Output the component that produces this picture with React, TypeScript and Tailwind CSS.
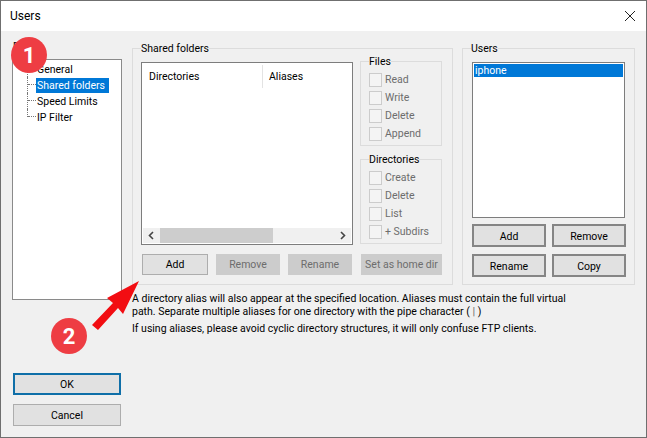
import React from 'react';

const disabledText = 'text-[#6d6d6d]';

function Group({ label, className, children }: { label: string; className?: string; children: React.ReactNode }) {
  return (
    <div className={`border border-[#dcdcdc] ${className ?? ''}`}>
      <div className="-mt-2 ml-2 h-[14px] w-fit bg-[#f0f0f0] leading-[16px]">{label}</div>
      {children}
    </div>
  );
}

function Check({ label }: { label: string }) {
  return (
    <div className="flex h-[18px] items-start gap-[3px]">
      <span className="h-[14px] w-[13px] shrink-0 border border-[#cccccc] bg-[#f4f4f4]" />
      <span className={`leading-[14px] ${disabledText}`}>{label}</span>
    </div>
  );
}

function PermGroup({ label, items }: { label: string; items: string[] }) {
  return (
    <Group label={label} className="h-[85px] w-[82px]">
      <div className="mt-[5px] pl-2">
        {items.map((item) => (
          <Check key={item} label={item} />
        ))}
      </div>
    </Group>
  );
}

function DisabledBtn({ label, className }: { label: string; className: string }) {
  return (
    <div className={`flex h-[21px] items-center justify-center whitespace-nowrap bg-[#cccccc] pt-[1px] ${disabledText} ${className}`}>{label}</div>
  );
}

function UserBtn({ label }: { label: string }) {
  return (
    <div className="flex h-[23px] w-[74px] items-center justify-center border-2 border-[#858585] bg-[#e1e1e1] pt-[2px]">{label}</div>
  );
}

function TreeRow({ label, selected, last }: { label: string; selected?: boolean; last?: boolean }) {
  return (
    <div className="flex h-4 items-center">
      <div className={`w-[9px] self-start border-l border-dotted border-[#777777] ${last ? 'h-2' : 'h-4'}`}>
        <div className="h-2 border-b border-dotted border-[#777777]" />
      </div>
      <span className={`whitespace-nowrap px-[1px] leading-[15px] ${selected ? 'w-[73px] bg-[#0078d7] text-white' : ''}`}>{label}</span>
    </div>
  );
}

export default function App() {
  return (
    <div className="relative flex h-[438px] w-[647px] flex-col overflow-hidden border border-[#6f6f6f] bg-[#f0f0f0] font-['Roboto','Liberation_Sans',sans-serif] text-[10.5px] text-[#000000]">
      {/* title bar */}
      <div className="flex h-[30px] shrink-0 items-center justify-between bg-white pl-[9px] pr-[10px]">
        <span className="text-[12px]">Users</span>
        <svg width="12" height="12" viewBox="0 0 12 12" className="mb-[1px]">
          <path d="M1 1 L11 11 M11 1 L1 11" stroke="#222222" strokeWidth="1" fill="none" />
        </svg>
      </div>

      <div className="flex flex-1 pl-[11px] pt-[17px]">
        {/* left column */}
        <div className="flex w-[110px] flex-col">
          <div className="h-[11px] -translate-y-2 pl-[1px] leading-[14px]">Page</div>
          <div className="h-[241px] border border-[#8a8a8a] bg-white pl-[14px] pt-[1px]">
            <TreeRow label="General" />
            <TreeRow label="Shared folders" selected />
            <TreeRow label="Speed Limits" />
            <TreeRow label="IP Filter" last />
          </div>
          <div className="ml-[1px] mt-[73px] flex h-[22px] w-[108px] items-center justify-center border-2 border-[#0f6fa8] bg-[#e1e1e1] pt-[1px]">OK</div>
          <div className="ml-[1px] mt-[9px] flex h-[22px] w-[108px] items-center justify-center border border-[#adadad] bg-[#e1e1e1] pt-[1px]">Cancel</div>
        </div>

        {/* right column */}
        <div className="ml-[10px] flex w-[503px] flex-col">
          <div className="flex gap-[9px]">
            <Group label="Shared folders" className="h-[237px] w-[321px]">
              <div className="mt-[7px] flex gap-[7px] pl-2">
                <div className="flex h-[183px] w-[212px] flex-col justify-between border border-[#7d7d7d] bg-white p-[1px]">
                  <div className="flex h-6 items-center pt-[1px]">
                    <span className="w-[119px] pl-[6px]">Directories</span>
                    <span className="h-full border-l border-[#e3e3e3] pl-[6px] leading-6">Aliases</span>
                  </div>
                  <div className="flex h-[15px] items-center bg-[#f0f0f0]">
                    <svg width="17" height="15" viewBox="0 0 17 15" className="shrink-0">
                      <path d="M10 4 L6.5 7.5 L10 11" stroke="#444444" strokeWidth="1.6" fill="none" />
                    </svg>
                    <div className="h-[15px] w-[113px] bg-[#cdcdcd]" />
                    <svg width="17" height="15" viewBox="0 0 17 15" className="ml-auto shrink-0">
                      <path d="M7 4 L10.5 7.5 L7 11" stroke="#444444" strokeWidth="1.6" fill="none" />
                    </svg>
                  </div>
                </div>
                <div className="-mt-[1px] flex flex-col gap-[13px]">
                  <PermGroup label="Files" items={['Read', 'Write', 'Delete', 'Append']} />
                  <PermGroup label="Directories" items={['Create', 'Delete', 'List', '+ Subdirs']} />
                </div>
              </div>
              <div className="ml-[9px] mt-[9px] flex">
                <div className="flex h-[21px] w-[66px] items-center justify-center border border-[#adadad] bg-[#e1e1e1] pt-[1px]">Add</div>
                <DisabledBtn label="Remove" className="ml-2 w-[64px]" />
                <DisabledBtn label="Rename" className="ml-2 w-[64px]" />
                <DisabledBtn label="Set as home dir" className="ml-[9px] w-[81px]" />
              </div>
            </Group>

            <Group label="Users" className="h-[237px] w-[173px]">
              <div className="ml-[9px] mt-[7px] h-[156px] w-[153px] border border-[#7d7d7d] bg-white p-[1px]">
                <div className="h-[13px] bg-[#0078d7] pl-[1px] leading-[13px] text-white">iphone</div>
              </div>
              <div className="ml-[9px] mt-[6px] grid w-[154px] grid-cols-[74px_74px] gap-x-[6px] gap-y-[7px]">
                <UserBtn label="Add" />
                <UserBtn label="Remove" />
                <UserBtn label="Rename" />
                <UserBtn label="Copy" />
              </div>
            </Group>
          </div>

          <div className="mt-[7px] whitespace-nowrap leading-[13px]">
            <p>
              A directory alias will also appear at the specified location. Aliases must contain the full virtual
              <br />
              path. Separate multiple aliases for one directory with the pipe character ( <span className="font-bold text-[#777777]">|</span> )
            </p>
            <p className="mt-1">If using aliases, please avoid cyclic directory structures, it will only confuse FTP clients.</p>
          </div>
        </div>
      </div>

      {/* annotations */}
      <div className="absolute left-[10px] top-[36px] flex h-9 w-9 items-center justify-center rounded-full bg-[#ee3d43] text-[22px] font-bold text-white">1</div>
      <div className="absolute left-[50px] top-[317px] flex h-9 w-9 items-center justify-center rounded-full bg-[#ee3d43] text-[22px] font-bold text-white">2</div>
      <svg width="60" height="60" viewBox="0 0 60 60" className="absolute left-[89px] top-[275px]">
        <polygon points="49,5 33,38 28,32 8,54 2,49 23,27 17,22" fill="#f20d12" />
      </svg>
    </div>
  );
}
